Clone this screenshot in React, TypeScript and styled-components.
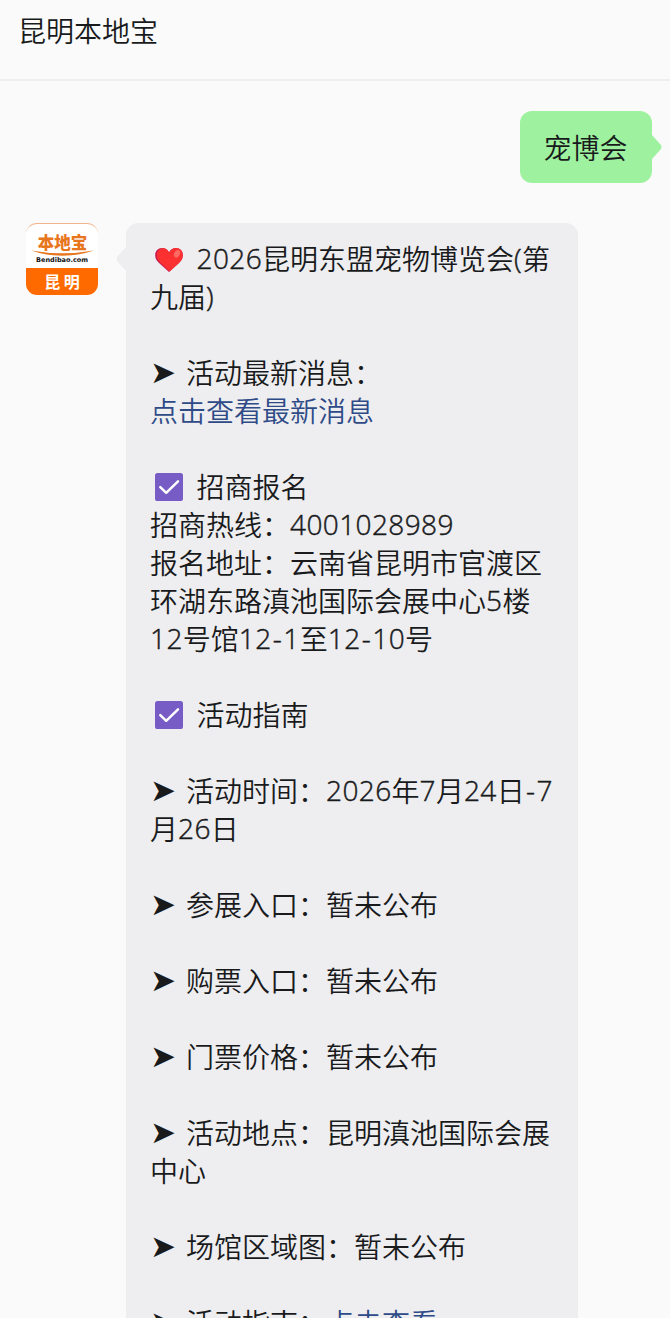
import React from "react";
import styled, { createGlobalStyle } from "styled-components";

const GlobalStyle = createGlobalStyle`
  body {
    margin: 0;
    background-color: #fafafa;
  }
`;

const ChatContainer = styled.div`
  display: flex;
  flex-direction: column;
  height: 1318px;
  width: 670px;
  overflow: hidden;
  background-color: #fafafa;
  color: #191a1c;
  font-family: "Noto Sans CJK SC", sans-serif;
  font-size: 28px;
  font-weight: 350;
  line-height: 38px;
`;

const Header = styled.header`
  flex: none;
  box-sizing: border-box;
  height: 81px;
  padding: 11px 18px 0;
  border-bottom: 2px solid #eeeeee;
`;

const Title = styled.div`
  font-size: 28px;
`;

const ChatWindow = styled.main`
  flex: 1;
  min-height: 0;
  display: flex;
  flex-direction: column;
  gap: 40px;
  padding: 30px 0 0;
`;

const MessageRow = styled.div<{ $isUser?: boolean }>`
  flex: none;
  display: flex;
  align-items: flex-start;
  justify-content: ${({ $isUser }) => ($isUser ? "flex-end" : "flex-start")};
  padding: ${({ $isUser }) => ($isUser ? "0 8px 0 0" : "0 0 0 26px")};
`;

const UserBubble = styled.div`
  box-sizing: border-box;
  width: 132px;
  height: 72px;
  padding: 17px 23.5px;
  border-radius: 12px;
  background-color: #9ef29f;
  white-space: nowrap;
`;

const BotBubble = styled.div`
  box-sizing: border-box;
  width: 452px;
  padding: 16px 0 20px 24px;
  border-radius: 12px;
  background-color: #eeeef0;
`;

const Tail = styled.svg<{ $top: number }>`
  flex: none;
  display: block;
  width: 10px;
  height: 26px;
  margin-top: ${({ $top }) => $top}px;
`;

const Avatar = styled.div`
  flex: none;
  box-sizing: border-box;
  display: flex;
  flex-direction: column;
  width: 72px;
  height: 72px;
  margin-right: 18px;
  border-top: 1px solid #f0b58c;
  border-radius: 11px;
  overflow: hidden;
  background-color: #ffffff;
  text-align: center;
`;

const BrandName = styled.div`
  box-sizing: border-box;
  height: 25px;
  padding: 7px 0 0 1px;
  color: #e8761e;
  font-size: 16.5px;
  font-weight: 900;
  line-height: 23px;
  white-space: nowrap;
`;

const Swoosh = styled.svg`
  flex: none;
  display: block;
  width: 72px;
  height: 8px;
`;

const BrandUrl = styled.div`
  height: 11px;
  color: #111111;
  font-family: "DejaVu Sans", sans-serif;
  font-size: 6.5px;
  font-weight: 700;
  line-height: 7px;
`;

const City = styled.div`
  flex: 1;
  background-color: #ff6a00;
  color: #ffffff;
  font-size: 16px;
  font-weight: 700;
  line-height: 27px;
`;

const Line = styled.div`
  display: flex;
  align-items: center;
  height: 38px;
  white-space: pre;
`;

const Link = styled.span`
  color: #2e4b87;
`;

const Digits = styled.span`
  font-family: "Open Sans", "Noto Sans", sans-serif;
  font-weight: 300;
  letter-spacing: 0.4px;
  vertical-align: 1px;
  line-height: 1;
  -webkit-text-stroke: 0.45px currentColor;
`;

const Hyphen = styled(Digits)`
  margin-left: 1.2px;
  letter-spacing: 1.6px;
`;

const Arrow = styled.span`
  width: 36px;
  font-family: "DejaVu Sans", sans-serif;
  font-size: 31px;
  font-weight: 400;
`;

const Emoji = styled.svg`
  flex: none;
  display: block;
  width: 28px;
  height: 28px;
  margin: 2px 13.5px 0 5px;
`;

const Heart = () => (
  <Emoji viewBox="0 0 28 28">
    <path d="M14 27 L4 18 C1.2 15.4 0.2 13 0.2 10 C0.2 6 3 3 7 3 C10.2 3 12.8 4.8 14 7.4 C15.2 4.8 17.8 3 21 3 C25 3 27.8 6 27.8 10 C27.8 13 26.8 15.4 24 18Z" fill="#c51a52" />
    <path d="M14.6 26.4 L5.4 18 C2.8 15.4 1.8 13 1.8 10 C1.8 6.2 4.4 3.2 8 3.2 C11.2 3.2 13.3 5.2 14.2 8 C15.2 5 17.7 3 21 3 C25 3 27.8 6 27.8 10 C27.8 13 26.8 15.4 24 18Z" fill="#fa3130" />
    <ellipse cx="22" cy="8.8" rx="2.8" ry="4" transform="rotate(28 22 8.8)" fill="#ff6a62" />
  </Emoji>
);

const Check = () => (
  <Emoji viewBox="0 0 28 28">
    <rect width="28" height="28" rx="2.6" fill="#775cc5" />
    <path d="M5.3 14.2 L11.2 19.8 L23 8.4" fill="none" stroke="#ffffff" strokeWidth="2.5" strokeLinecap="round" strokeLinejoin="round" />
  </Emoji>
);

// latin digits and hyphens are set in their own face, the rest stays CJK
const Text: React.FC<{ children: string }> = ({ children }) => (
  <span>
    {children.split(/(\d+|[-()])/).filter(Boolean).map((part, index) => {
      if (part === "-") return <Hyphen key={index}>{part}</Hyphen>;
      if (/^[\d()]/.test(part)) return <Digits key={index}>{part}</Digits>;
      return part;
    })}
  </span>
);

type LineData = { icon?: "heart" | "check" | "arrow"; text?: string; link?: string };

const lines: LineData[] = [
  { icon: "heart", text: "2026昆明东盟宠物博览会(第" },
  { text: "九届)" },
  {},
  { icon: "arrow", text: "活动最新消息：" },
  { link: "点击查看最新消息" },
  {},
  { icon: "check", text: "招商报名" },
  { text: "招商热线：4001028989" },
  { text: "报名地址：云南省昆明市官渡区" },
  { text: "环湖东路滇池国际会展中心5楼" },
  { text: "12号馆12-1至12-10号" },
  {},
  { icon: "check", text: "活动指南" },
  {},
  { icon: "arrow", text: "活动时间：2026年7月24日-7" },
  { text: "月26日" },
  {},
  { icon: "arrow", text: "参展入口：暂未公布" },
  {},
  { icon: "arrow", text: "购票入口：暂未公布" },
  {},
  { icon: "arrow", text: "门票价格：暂未公布" },
  {},
  { icon: "arrow", text: "活动地点：昆明滇池国际会展" },
  { text: "中心" },
  {},
  { icon: "arrow", text: "场馆区域图：暂未公布" },
  {},
  { icon: "arrow", text: "活动指南：", link: "点击查看" },
];

const App: React.FC = () => {
  return (
    <ChatContainer>
      <GlobalStyle />
      <Header>
        <Title>昆明本地宝</Title>
      </Header>
      <ChatWindow>
        <MessageRow $isUser>
          <UserBubble>宠博会</UserBubble>
          <Tail $top={23} viewBox="0 0 10 26">
            <path d="M0 1 L9 11 Q10 13 9 15 L0 25Z" fill="#9ef29f" />
          </Tail>
        </MessageRow>
        <MessageRow>
          <Avatar>
            <BrandName>本地宝</BrandName>
            <Swoosh viewBox="0 0 72 8">
              <path d="M5 1.5 Q36 7 68 1.5 Q36 12 5 1.5Z" fill="#e8761e" />
            </Swoosh>
            <BrandUrl>Bendibao.com</BrandUrl>
            <City>昆 明</City>
          </Avatar>
          <Tail $top={23} viewBox="0 0 10 26">
            <path d="M10 1 L1 11 Q0 13 1 15 L10 25Z" fill="#eeeef0" />
          </Tail>
          <BotBubble>
            {lines.map((line, index) => (
              <Line key={index}>
                {line.icon === "heart" && <Heart />}
                {line.icon === "check" && <Check />}
                {line.icon === "arrow" && <Arrow>➤</Arrow>}
                {line.text && <Text>{line.text}</Text>}
                {line.link && <Link>{line.link}</Link>}
              </Line>
            ))}
          </BotBubble>
        </MessageRow>
      </ChatWindow>
    </ChatContainer>
  );
};

export default App;
